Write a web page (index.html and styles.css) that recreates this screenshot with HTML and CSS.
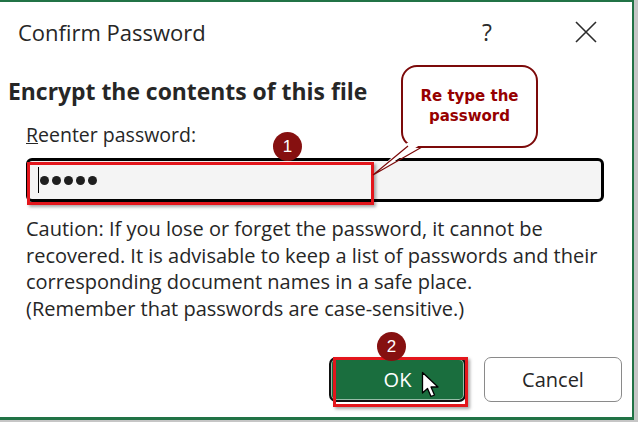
FILE: index.html
```
<!DOCTYPE html>
<html lang="en">

<head>
  <meta charset="UTF-8">
  <meta name="viewport" content="width=device-width, initial-scale=1.0">
  <title>Confirm Password</title>
  <link rel="stylesheet" href="styles.css">
</head>

<body>
  <div class="dialog">
    <div class="titlebar">
      <span class="title">Confirm Password</span>
      <span class="help">?</span>
      <span class="close">
        <svg width="22" height="22" viewBox="0 0 22 22">
          <path d="M1 1 L21 21 M21 1 L1 21" stroke="#2b2b2b" stroke-width="1.6" fill="none"/>
        </svg>
      </span>
    </div>

    <h1 class="heading">Encrypt the contents of this file</h1>
    <label class="label"><u>R</u>eenter password:</label>

    <div class="field">
      <span class="caret"></span>
      <span class="dots"><i></i><i></i><i></i><i></i><i></i></span>
      <span class="mark mark-field"></span>
    </div>

    <p class="caution">
      Caution: If you lose or forget the password, it cannot be<br>
      recovered. It is advisable to keep a list of passwords and their<br>
      corresponding document names in a safe place.<br>
      (Remember that passwords are case-sensitive.)
    </p>

    <div class="buttons">
      <div class="ok-wrap">
        <button class="btn ok">OK</button>
        <span class="mark mark-ok"></span>
        <svg class="pointer" width="20" height="28" viewBox="0 0 20 28">
          <path d="M1.5 1.5 L1.5 22 L6.5 17.5 L10 25.5 L13.5 24 L10 16 L17 16 Z" fill="#fff" stroke="#000" stroke-width="1.3" stroke-linejoin="round"/>
        </svg>
      </div>
      <button class="btn cancel">Cancel</button>
    </div>

    <span class="badge badge-1">1</span>
    <span class="badge badge-2">2</span>

    <div class="callout">Re type the<br>password</div>
    <svg class="tail" width="60" height="40" viewBox="0 0 60 40">
      <polygon points="37,3 53,3 3,35" fill="#fff"/>
      <polyline points="38,6 3,35 52,7" fill="none" stroke="#7c0a0a" stroke-width="1.2"/>
    </svg>
  </div>
</body>

</html>
```

FILE: styles.css
```
body {
  margin: 0;
  background: #c6c6c6;
  font-family: "Open Sans", "Noto Sans", sans-serif;
  color: #222;
}
.dialog {
  position: relative;
  width: 632px;
  height: 415px;
  background: #fff;
  border-top: 2px solid #217346;
  border-right: 2px solid #217346;
  border-bottom: 3px solid #217346;
  display: flex;
  flex-direction: column;
}
.titlebar {
  height: 60px;
  display: flex;
  align-items: center;
  padding-left: 18px;
}
.title {
  font-size: 22px;
  color: #262626;
}
.help {
  margin-left: auto;
  font-size: 23px;
  color: #2b2b2b;
  width: 14px;
}
.close {
  display: flex;
  margin-left: 79px;
  margin-right: 35px;
}
.heading {
  margin: 17px 0 0 8px;
  font-size: 22.9px;
  line-height: 26px;
  font-weight: 700;
  color: #262626;
}
.label {
  margin: 18px 0 0 26px;
  font-size: 19.5px;
  line-height: 24px;
  color: #262626;
}
.field {
  position: relative;
  margin: 11px 0 0 26px;
  width: 578px;
  height: 44px;
  box-sizing: border-box;
  border: 3px solid #000;
  border-radius: 6px;
  background: #f4f4f4;
  display: flex;
  align-items: center;
  padding-left: 9px;
}
.caret {
  width: 1px;
  height: 26px;
  background: #000;
}
.dots {
  display: flex;
  gap: 3px;
  margin-left: 1px;
}
.dots i {
  width: 9px;
  height: 9px;
  border-radius: 50%;
  background: #1e1e1e;
}
.mark {
  position: absolute;
  box-sizing: border-box;
  border: 3px solid #e3161c;
  box-shadow: 2px 2px 3px rgba(0, 0, 0, 0.35);
}
.mark-field {
  left: -2px;
  top: 1px;
  width: 347px;
  height: 43px;
}
.caution {
  margin: 14px 0 0 26px;
  font-size: 20px;
  line-height: 26.5px;
  white-space: nowrap;
  color: #262626;
}
.buttons {
  margin-top: 35px;
  display: flex;
  justify-content: flex-end;
  gap: 18px;
  padding-right: 10px;
}
.btn {
  height: 45px;
  font-family: "Open Sans", "Noto Sans", sans-serif;
  font-size: 20px;
  border-radius: 7px;
  padding: 0;
}
.ok-wrap {
  position: relative;
  display: flex;
}
.ok {
  width: 137px;
  background: #1a6e3e;
  color: #fff;
  border: 2px solid #111;
  box-shadow: inset 0 0 0 1px rgba(255, 255, 255, 0.55);
}
.mark-ok {
  left: 4px;
  top: 0;
  width: 135px;
  height: 50px;
}
.pointer {
  position: absolute;
  left: 92px;
  top: 14px;
}
.cancel {
  width: 138px;
  background: #fff;
  color: #262626;
  border: 1px solid #8a8a8a;
}
.badge {
  position: absolute;
  width: 29px;
  height: 29px;
  border-radius: 50%;
  background: #861010;
  color: #fff;
  font-family: "Liberation Sans", Arial, sans-serif;
  font-size: 17px;
  display: flex;
  align-items: center;
  justify-content: center;
}
.badge-1 {
  left: 273px;
  top: 130px;
}
.badge-2 {
  left: 377px;
  top: 330px;
}
.callout {
  position: absolute;
  left: 401px;
  top: 63px;
  width: 137px;
  height: 83px;
  box-sizing: border-box;
  border: 2px solid #7c0a0a;
  border-radius: 16px;
  background: #fff;
  color: #960000;
  font-family: "DejaVu Sans", Verdana, sans-serif;
  font-weight: 700;
  font-size: 15px;
  line-height: 20px;
  text-align: center;
  padding-top: 19px;
}
.tail {
  position: absolute;
  left: 370px;
  top: 138px;
}
```
